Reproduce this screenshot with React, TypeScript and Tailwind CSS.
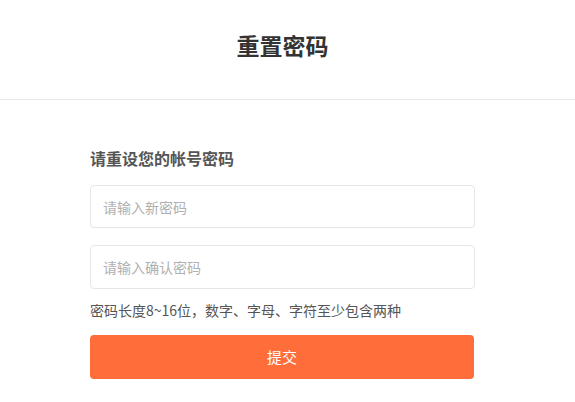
import { useState } from "react";

export default function App() {
  const [pwd, setPwd] = useState("");
  const [confirm, setConfirm] = useState("");

  return (
    <div className="w-[575px] h-[402px] bg-white font-['Noto_Sans_CJK_SC','Noto_Sans',sans-serif] overflow-hidden">
      {/* Header */}
      <div className="h-[100px] border-b border-[#e8e8e8] flex justify-center">
        <h1 className="mt-[30px] leading-[30px] text-[23px] font-bold text-[#333] pr-[10px]">重置密码</h1>
      </div>

      {/* Form */}
      <div className="ml-[90px] w-[385px] pt-[48px] flex flex-col">
        <p className="leading-[20px] text-[16px] font-bold text-[#555]">请重设您的帐号密码</p>

        <input
          type="password"
          value={pwd}
          onChange={(e) => setPwd(e.target.value)}
          placeholder="请输入新密码"
          className="mt-[17px] h-[43px] w-full rounded-[4px] border border-[#e6e6e6] px-[12px] text-[14px] text-[#333] placeholder:text-[#b0b0b0] outline-none"
        />

        <input
          type="password"
          value={confirm}
          onChange={(e) => setConfirm(e.target.value)}
          placeholder="请输入确认密码"
          className="mt-[17px] h-[44px] w-full rounded-[4px] border border-[#e6e6e6] px-[12px] text-[14px] text-[#333] placeholder:text-[#b0b0b0] outline-none"
        />

        <p className="mt-[11px] leading-[20px] text-[14px] text-[#555]">密码长度8~16位，数字、字母、字符至少包含两种</p>

        <button className="mt-[15px] h-[44px] w-[384px] rounded-[4px] bg-[#ff6d3a] text-white text-[15px]">
          提交
        </button>
      </div>
    </div>
  );
}
